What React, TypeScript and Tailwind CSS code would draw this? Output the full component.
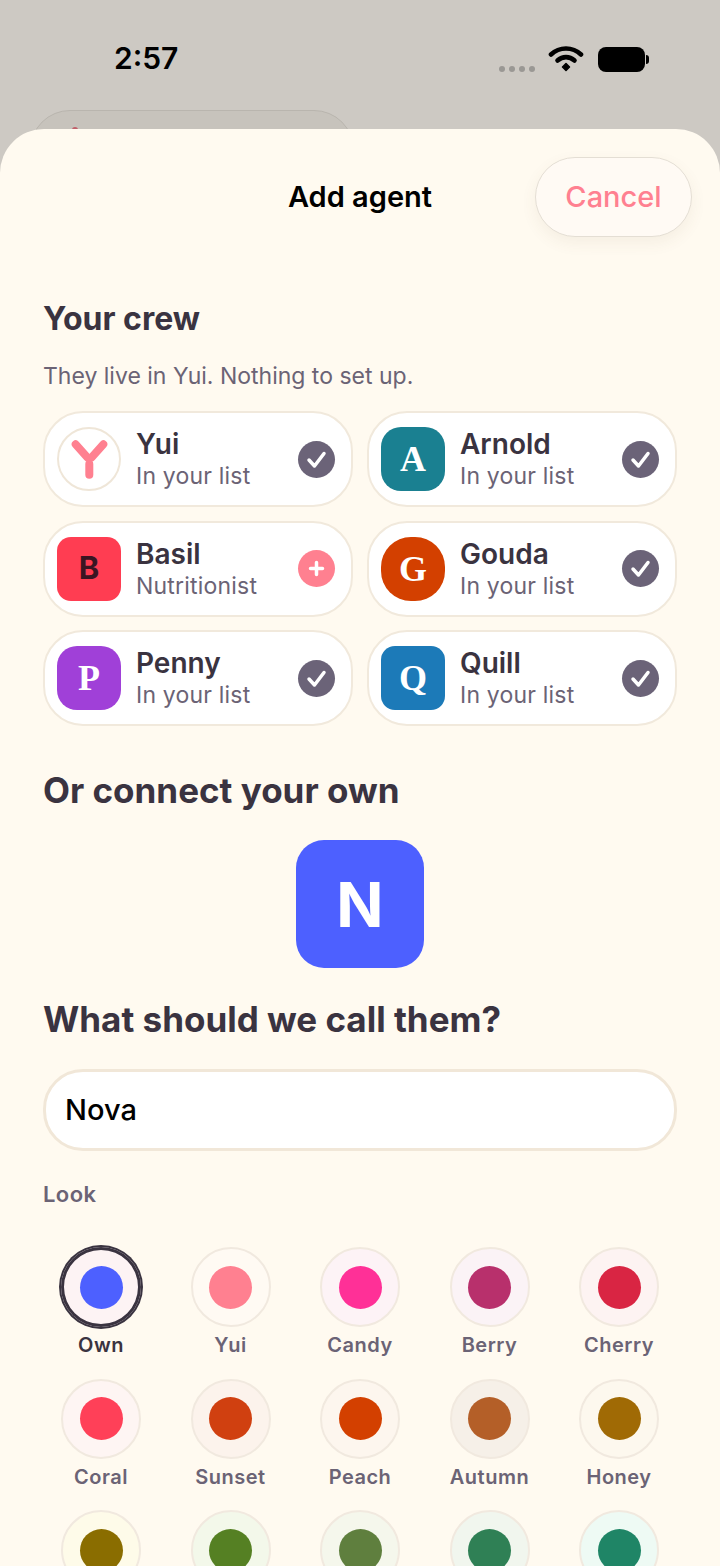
import React from 'react';

const INK = 'text-[#3a3340]';

type Agent = {
  name: string;
  sub: string;
  letter: string;
  avatar: string;
  added: boolean;
};

const CREW: Agent[] = [
  { name: 'Yui', sub: 'In your list', letter: '', avatar: '', added: true },
  { name: 'Arnold', sub: 'In your list', letter: 'A', avatar: "bg-[#1a8091] rounded-[20px] text-white font-['Liberation_Serif',serif] font-bold text-[36px]", added: true },
  { name: 'Basil', sub: 'Nutritionist', letter: 'B', avatar: 'bg-[#ff3d52] rounded-[14px] text-[#3a1522] font-bold text-[31px]', added: false },
  { name: 'Gouda', sub: 'In your list', letter: 'G', avatar: "bg-[#d34000] rounded-[30px] text-white font-['Liberation_Serif',serif] font-bold text-[36px]", added: true },
  { name: 'Penny', sub: 'In your list', letter: 'P', avatar: "bg-[#a040d8] rounded-[20px] text-white font-['Liberation_Serif',serif] font-bold text-[36px]", added: true },
  { name: 'Quill', sub: 'In your list', letter: 'Q', avatar: "bg-[#1c7ab8] rounded-[14px] text-white font-['Liberation_Serif',serif] font-bold text-[36px]", added: true },
];

const LOOKS = [
  { label: 'Own', dot: 'bg-[#4d60ff]', tint: 'bg-[#fdf3f4]', selected: true },
  { label: 'Yui', dot: 'bg-[#ff8090]', tint: 'bg-[#fffaf3]' },
  { label: 'Candy', dot: 'bg-[#ff3097]', tint: 'bg-[#fdf3f6]' },
  { label: 'Berry', dot: 'bg-[#b8306c]', tint: 'bg-[#fbf3f6]' },
  { label: 'Cherry', dot: 'bg-[#d92543]', tint: 'bg-[#fdf3f2]' },
  { label: 'Coral', dot: 'bg-[#ff4058]', tint: 'bg-[#fef5f3]' },
  { label: 'Sunset', dot: 'bg-[#d04010]', tint: 'bg-[#fcf3ec]' },
  { label: 'Peach', dot: 'bg-[#d34000]', tint: 'bg-[#fdf6ee]' },
  { label: 'Autumn', dot: 'bg-[#b45f28]', tint: 'bg-[#f6f0e8]' },
  { label: 'Honey', dot: 'bg-[#a06a05]', tint: 'bg-[#fdf8ee]' },
  { label: '', dot: 'bg-[#8a6d00]', tint: 'bg-[#fefbe9]' },
  { label: '', dot: 'bg-[#558023]', tint: 'bg-[#f3f8ea]' },
  { label: '', dot: 'bg-[#5f7f3e]', tint: 'bg-[#f5f7ec]' },
  { label: '', dot: 'bg-[#2f8055]', tint: 'bg-[#f1f6ee]' },
  { label: '', dot: 'bg-[#1f8566]', tint: 'bg-[#eefaf4]' },
];

const YuiMark = () => (
  <div className="w-16 h-16 rounded-full bg-white border-2 border-[#efe6d8] shrink-0 box-border overflow-hidden">
    <svg viewBox="0 0 60 60" className="w-full h-full" fill="none" stroke="#ff8090" strokeWidth="8" strokeLinecap="round">
      <path d="M16.7 15.3L28.3 28.3" />
      <path d="M44.3 15.3L32.7 28.3" />
      <path d="M30.3 35L30.3 45.7" />
    </svg>
  </div>
);

const StatusBadge = ({ added }: { added: boolean }) => (
  <div className={`w-[37px] h-[37px] rounded-full shrink-0 ${added ? 'bg-[#6b6378]' : 'bg-[#ff8090]'}`}>
    <svg viewBox="0 0 37 37" className="w-full h-full" fill="none" stroke="#fff" strokeWidth="3.5" strokeLinecap="round" strokeLinejoin="round">
      {added ? <path d="M11 19L16.5 25L26 12.5" /> : <path d="M18.5 12.5V24.5M12.5 18.5H24.5" />}
    </svg>
  </div>
);

const AgentCard = ({ agent }: { agent: Agent }) => (
  <div className="h-24 rounded-[40px] bg-white border-2 border-[#f1e9dc] flex items-center pl-3 pr-4 box-border">
    {agent.letter ? (
      <div className={`w-16 h-16 shrink-0 flex items-center justify-center ${agent.avatar}`}>{agent.letter}</div>
    ) : (
      <YuiMark />
    )}
    <div className="ml-[15px] flex-1 min-w-0">
      <div className={`text-[28px] leading-[34px] font-semibold ${INK}`}>{agent.name}</div>
      <div className="text-[23px] leading-[30px] text-[#6b6375] tracking-[0.2px]">{agent.sub}</div>
    </div>
    <StatusBadge added={agent.added} />
  </div>
);

const WifiIcon = () => (
  <svg viewBox="0 0 36 28" className="w-9 h-7" fill="none" stroke="#000" strokeWidth="4.6" strokeLinecap="round">
    <path d="M3 9.5C11.5 1.5 24.5 1.5 33 9.5" />
    <path d="M9.5 15.5C14.5 11 21.5 11 26.5 15.5" />
    <path d="M14.5 22L18 18.6L21.5 22L18 25.4Z" fill="#000" strokeWidth="1.5" strokeLinejoin="round" />
  </svg>
);

export default function App() {
  return (
    <div className="relative w-[720px] h-[1566px] overflow-hidden bg-[#cdc9c3] font-[Inter,sans-serif]">
      {/* status bar */}
      <div className="h-[110px] pt-[36px] pl-[114px] pr-[71px] flex justify-between">
        <span className="text-[30px] leading-[44px] font-semibold text-black">2:57</span>
        <div className="flex items-center h-[44px] mt-[1px]">
          <div className="flex gap-[4px] mt-[20px] mr-[13px]">
            <span className="w-[6px] h-[6px] rounded-full bg-[#9a9894]" />
            <span className="w-[6px] h-[6px] rounded-full bg-[#9a9894]" />
            <span className="w-[6px] h-[6px] rounded-full bg-[#9a9894]" />
            <span className="w-[6px] h-[6px] rounded-full bg-[#9a9894]" />
          </div>
          <WifiIcon />
          <div className="w-[47px] h-[25px] rounded-[8px] bg-black ml-[14px]" />
          <div className="w-[3px] h-[9px] rounded-r-full bg-black ml-[1px]" />
        </div>
      </div>

      {/* list card dimmed behind the sheet */}
      <div className="ml-[30px] w-[324px] h-[80px] rounded-t-[40px] border border-[#b9b5ae] bg-[#c7c3bc] flex pt-[16px] pl-[41px]">
        <span className="w-[6px] h-[6px] rounded-full bg-[#c0606a]" />
      </div>

      {/* sheet */}
      <div className="absolute top-[129px] inset-x-0 bottom-0 rounded-t-[44px] bg-[#fffaf0] overflow-hidden">
        <div className="grid grid-cols-[1fr_auto_1fr] items-center pt-[28px] px-[28px]">
          <div />
          <h1 className="text-[29px] leading-[36px] font-semibold text-black">Add agent</h1>
          <div className="flex justify-end">
            <button className="w-[157px] h-20 rounded-[40px] border border-[#e4ded4] bg-[#fffaf4] shadow-[0_6px_16px_rgba(120,90,60,0.07)] text-[29px] font-medium text-[#ff8090]">
              Cancel
            </button>
          </div>
        </div>

        <div className="px-[43px]">
          <h2 className={`mt-[62px] text-[32px] leading-[40px] font-bold ${INK}`}>Your crew</h2>
          <p className="mt-[21px] text-[23px] leading-[32px] text-[#6b6375]">They live in Yui. Nothing to set up.</p>

          <div className="mt-[19px] grid grid-cols-2 gap-x-[14px] gap-y-[13.5px]">
            {CREW.map(agent => <AgentCard key={agent.name} agent={agent} />)}
          </div>

          <h2 className={`mt-[44px] text-[35px] leading-[40px] font-bold ${INK}`}>Or connect your own</h2>
          <div className="mt-[30px] mx-auto w-32 h-32 rounded-[28px] bg-[#4d60ff] flex items-center justify-center text-white text-[62px] font-bold">N</div>
          <h2 className={`mt-[31px] text-[35px] leading-[40px] font-bold ${INK}`}>What should we call them?</h2>

          <div className="mt-[30px] h-[82px] rounded-[40px] bg-white border-[3px] border-[#f1e7d8] flex items-center pl-[19px] box-border text-[29px] font-medium text-black">
            Nova
          </div>

          <div className="mt-[29px] text-[22px] leading-[28px] font-semibold text-[#6b6375] tracking-[0.4px]">Look</div>

          <div className="mt-[39px] px-[18px] grid grid-cols-[repeat(5,80px)] justify-between gap-y-[21.5px]">
            {LOOKS.map((look, i) => (
              <div key={i} className="flex flex-col items-center">
                <div className={`w-20 h-20 rounded-full flex items-center justify-center box-border ${look.tint} ${look.selected ? 'ring-2 ring-[#3a3340] inset-ring-3 inset-ring-[#3a3340]' : 'border-2 border-[#f1e9df]'}`}>
                  <span className={`w-[43px] h-[43px] rounded-full ${look.dot}`} />
                </div>
                {look.label && (
                  <span className={`mt-[6px] text-[20px] leading-[24px] font-semibold tracking-[0.5px] whitespace-nowrap ${look.selected ? INK : 'text-[#6b6375]'}`}>
                    {look.label}
                  </span>
                )}
              </div>
            ))}
          </div>
        </div>
      </div>
    </div>
  );
}
